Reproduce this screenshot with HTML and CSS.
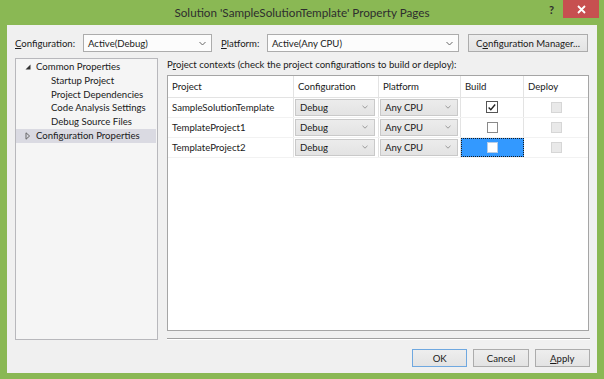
FILE: index.html
```html
<!DOCTYPE html>
<html>
<head>
<meta charset="utf-8">
<link rel="stylesheet" href="styles.css">
</head>
<body>
<div class="window">
  <div class="titlebar">
    <div class="title">Solution 'SampleSolutionTemplate' Property Pages</div>
    <div class="help">?</div>
    <div class="close"><svg width="9" height="9" viewBox="0 0 9 9"><path d="M1 1L8 8M8 1L1 8" stroke="#fff" stroke-width="1.8"/></svg></div>
  </div>
  <div class="client">
    <div class="toprow">
      <span class="lbl lbl-cfg"><u>C</u>onfiguration:</span>
      <div class="combo combo-cfg"><span>Active(Debug)</span><svg class="chev" width="7" height="5" viewBox="0 0 7 5"><path d="M0.5 1L3.5 4L6.5 1" fill="none" stroke="#666" stroke-width="1"/></svg></div>
      <span class="lbl lbl-plat"><u>P</u>latform:</span>
      <div class="combo combo-plat"><span>Active(Any CPU)</span><svg class="chev" width="7" height="5" viewBox="0 0 7 5"><path d="M0.5 1L3.5 4L6.5 1" fill="none" stroke="#666" stroke-width="1"/></svg></div>
      <div class="btn btn-cm">C<u>o</u>nfiguration Manager...</div>
    </div>
    <div class="main">
      <div class="tree">
        <div class="node"><span class="tri"><svg width="6" height="6" viewBox="0 0 6 6"><path d="M5.5 0.5V5.5H0.5Z" fill="#333"/></svg></span>Common Properties</div>
        <div class="node child">Startup Project</div>
        <div class="node child">Project Dependencies</div>
        <div class="node child">Code Analysis Settings</div>
        <div class="node child">Debug Source Files</div>
        <div class="node sel"><span class="tri"><svg width="6" height="8" viewBox="0 0 6 8"><path d="M1 0.8L4.6 4L1 7.2Z" fill="none" stroke="#666" stroke-width="1"/></svg></span>Configuration Properties</div>
      </div>
      <div class="right">
        <div class="caption">P<u>r</u>oject contexts (check the project configurations to build or deploy):</div>
        <div class="grid">
          <div class="row head">
            <div class="cell c1">Project</div>
            <div class="cell c2">Configuration</div>
            <div class="cell c3">Platform</div>
            <div class="cell c4">Build</div>
            <div class="cell c5">Deploy</div>
          </div>
          <div class="row">
            <div class="cell c1">SampleSolutionTemplate</div>
            <div class="cell c2"><div class="dd"><span>Debug</span><svg class="chev2" width="6" height="4" viewBox="0 0 6 4"><path d="M0.5 0.8L3 3.2L5.5 0.8" fill="none" stroke="#9a9a9a" stroke-width="1"/></svg></div></div>
            <div class="cell c3"><div class="dd"><span>Any CPU</span><svg class="chev2" width="6" height="4" viewBox="0 0 6 4"><path d="M0.5 0.8L3 3.2L5.5 0.8" fill="none" stroke="#9a9a9a" stroke-width="1"/></svg></div></div>
            <div class="cell c4 center"><span class="cb on"><svg width="11" height="11" viewBox="0 0 11 11"><path d="M1.8 5.4L4.2 7.9L9 2.2" fill="none" stroke="#222" stroke-width="1.5"/></svg></span></div>
            <div class="cell c5 center"><span class="cb dis"></span></div>
          </div>
          <div class="row">
            <div class="cell c1">TemplateProject1</div>
            <div class="cell c2"><div class="dd"><span>Debug</span><svg class="chev2" width="6" height="4" viewBox="0 0 6 4"><path d="M0.5 0.8L3 3.2L5.5 0.8" fill="none" stroke="#9a9a9a" stroke-width="1"/></svg></div></div>
            <div class="cell c3"><div class="dd"><span>Any CPU</span><svg class="chev2" width="6" height="4" viewBox="0 0 6 4"><path d="M0.5 0.8L3 3.2L5.5 0.8" fill="none" stroke="#9a9a9a" stroke-width="1"/></svg></div></div>
            <div class="cell c4 center"><span class="cb"></span></div>
            <div class="cell c5 center"><span class="cb dis"></span></div>
          </div>
          <div class="row">
            <div class="cell c1">TemplateProject2</div>
            <div class="cell c2"><div class="dd"><span>Debug</span><svg class="chev2" width="6" height="4" viewBox="0 0 6 4"><path d="M0.5 0.8L3 3.2L5.5 0.8" fill="none" stroke="#9a9a9a" stroke-width="1"/></svg></div></div>
            <div class="cell c3"><div class="dd"><span>Any CPU</span><svg class="chev2" width="6" height="4" viewBox="0 0 6 4"><path d="M0.5 0.8L3 3.2L5.5 0.8" fill="none" stroke="#9a9a9a" stroke-width="1"/></svg></div></div>
            <div class="cell c4 center selcell"><span class="cb"></span></div>
            <div class="cell c5 center"><span class="cb dis"></span></div>
          </div>
        </div>
        <div class="sep"></div>
      </div>
    </div>
    <div class="buttons">
      <div class="btn btn-ok">OK</div>
      <div class="btn btn-cancel">Cancel</div>
      <div class="btn btn-apply"><u>A</u>pply</div>
    </div>
  </div>
</div>
</body>
</html>
```
FILE: styles.css
```css
* { box-sizing: border-box; }
html, body { margin: 0; padding: 0; }
body {
  width: 604px;
  height: 379px;
  overflow: hidden;
  font-family: "Lato", "Open Sans", sans-serif;
  font-size: 9.6px;
  color: #1a1a1a;
}
u { text-decoration: underline; text-underline-offset: 1px; }

.window {
  width: 604px;
  height: 379px;
  background: #8ab854;
  padding: 0 7px 6px 7px;
  display: flex;
  flex-direction: column;
}

.titlebar {
  height: 25px;
  display: flex;
  align-items: center;
  justify-content: center;
  position: relative;
  margin-left: -7px;
  margin-right: -7px;
}
.title {
  font-size: 11.7px;
  color: #2e2e2e;
  padding-bottom: 1px;
}
.help {
  position: absolute;
  left: 549px;
  top: 3px;
  font-size: 11px;
  font-weight: bold;
  color: #2e2e2e;
}
.close {
  position: absolute;
  left: 563px;
  top: 0;
  width: 36px;
  height: 18px;
  background: #c75050;
  display: flex;
  align-items: center;
  justify-content: center;
}

.client {
  flex: 1;
  background: #f0f0f0;
  padding: 9px 7px 0 8px;
  display: flex;
  flex-direction: column;
}

.toprow {
  display: flex;
  align-items: center;
  height: 18px;
}
.lbl { white-space: nowrap; }
.lbl-cfg { width: 68px; }
.lbl-plat { width: 46px; margin-left: 9px; }
.combo {
  height: 18px;
  border: 1px solid #acacac;
  background: #fcfcfc;
  display: flex;
  align-items: center;
  justify-content: space-between;
  padding: 0 5px 0 4px;
}
.combo-cfg { width: 129px; }
.combo-plat { width: 192px; }
.chev { display: block; }

.btn {
  height: 18px;
  border: 1px solid #acacac;
  background: linear-gradient(#eeeeee, #e3e3e3);
  display: flex;
  align-items: center;
  justify-content: center;
  white-space: nowrap;
}
.btn-cm { width: 120px; margin-left: 9px; }

.main {
  display: flex;
  margin-top: 6px;
  height: 282px;
}

.tree {
  width: 143px;
  height: 282px;
  background: #f5f5f5;
  border: 1px solid #b8b8bc;
  padding-top: 1px;
}
.node {
  height: 13.75px;
  line-height: 13.75px;
  display: flex;
  align-items: center;
  padding-left: 20px;
  white-space: nowrap;
}
.node .tri {
  width: 8px;
  margin-left: -12px;
  margin-right: 4px;
  display: flex;
  align-items: center;
  justify-content: center;
}
.node .tri svg { display: block; }
.node.child { padding-left: 35px; }
.node.sel { background: #dadae2; margin-right: 1px; }

.right {
  margin-left: 9px;
  width: 423px;
  display: flex;
  flex-direction: column;
}
.caption {
  height: 17px;
  line-height: 14px;
  white-space: nowrap;
}
.grid {
  height: 258px;
  width: 422px;
  background: #fff;
  border: 1px solid #a5a5a5;
}
.row {
  display: flex;
  height: 20px;
  border-bottom: 1px solid #f2f2f2;
}
.row.head { height: 22px; border-bottom: 1px solid #e3e3e3; }
.cell {
  border-right: 1px solid #e3e3e3;
  display: flex;
  align-items: center;
  white-space: nowrap;
  padding-left: 4px;
}
.c1 { width: 126px; }
.c2 { width: 85px; padding: 1px 3px 1px 1px; }
.c3 { width: 82px; padding: 1px 2px 1px 1px; }
.c4 { width: 63px; }
.c5 { width: 64px; border-right: none; }
.head .cell { padding-left: 4px; }
.center { justify-content: center; padding-left: 0; }

.dd {
  width: 100%;
  height: 100%;
  border: 1px solid #c9c9c9;
  background: linear-gradient(#ececec, #e3e3e3);
  display: flex;
  align-items: center;
  justify-content: space-between;
  padding: 0 6px 0 4px;
}
.chev2 { display: block; }

.cb {
  width: 11px;
  height: 11px;
  border: 1px solid #8a8a8a;
  background: #fff;
  display: flex;
  align-items: center;
  justify-content: center;
}
.cb.on { width: 12px; height: 12px; border-color: #555; }
.cb svg { display: block; }
.cb.dis {
  border-color: #d6d6d6;
  background: #e9e9e9;
}
.selcell {
  background: #3399ff;
  outline: 1px dotted #1a1a1a;
  outline-offset: -1px;
  border-right-color: #3399ff;
}
.selcell .cb { border-color: #b8cde6; }

.sep {
  margin-top: 7px;
  height: 2px;
  border-top: 1px solid #a0a0a0;
  border-bottom: 1px solid #fff;
}

.buttons {
  display: flex;
  margin-top: 9px;
  padding-left: 397px;
}
.btn-ok { width: 56px; height: 18px; border-color: #6fa8e0; }
.btn-cancel { width: 56px; height: 18px; margin-left: 6px; }
.btn-apply { width: 56px; height: 18px; margin-left: 6px; }
```
